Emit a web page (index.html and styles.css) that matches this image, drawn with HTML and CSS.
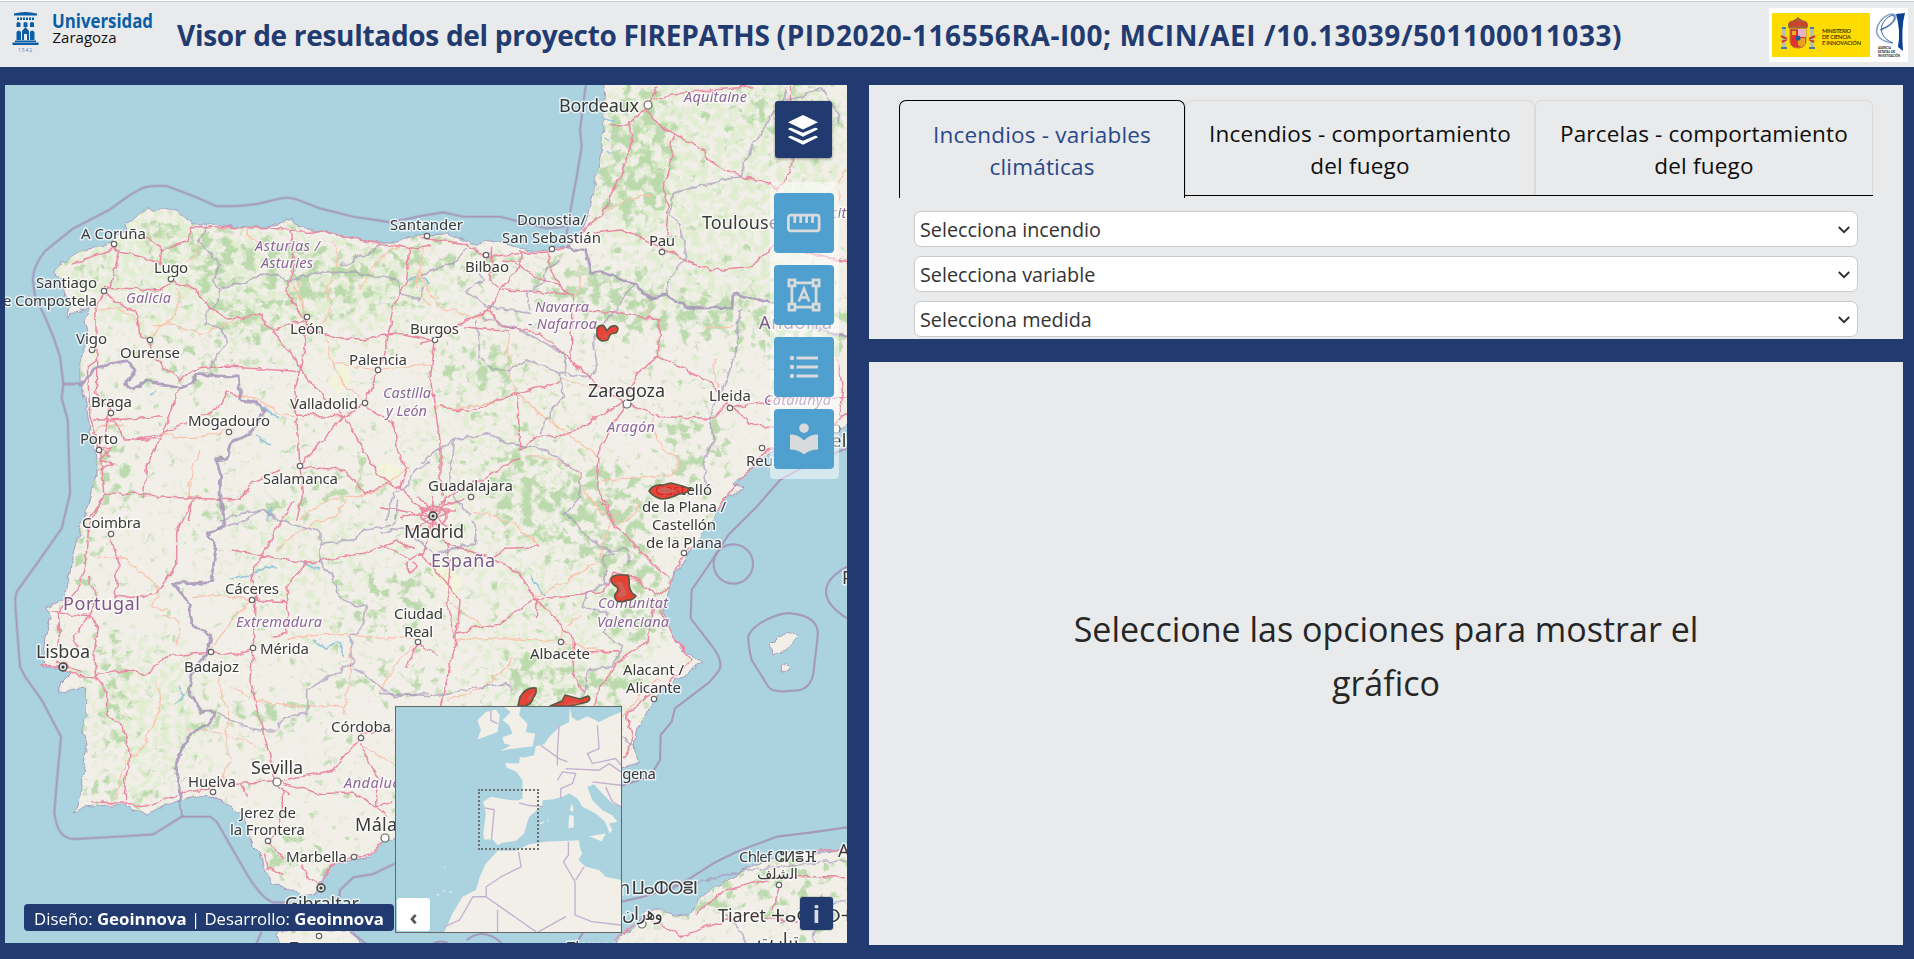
FILE: index.html
```html
<!DOCTYPE html>
<html lang="es">
<head>
<meta charset="utf-8">
<title>Visor FIREPATHS</title>
<link rel="stylesheet" href="styles.css">
</head>
<body>
<header class="header">
  <svg class="logo-unizar" viewBox="0 0 150 50" width="150" height="50">
    <g fill="#0a5ea8">
      <path d="M4 4.500Q15 1.500 27 4.500V6.500H4z"/>
      <path d="M7 8.500h2v2.500h-2zM10 8.500h2v2.500h-2zM13 8.500h2v2.500h-2zM16 8.500h2v2.500h-2zM19 8.500h2v2.500h-2zM22 8.500h2v2.500h-2z"/>
      <path d="M6.500 18v-4q1.700-2 4 0v4zM13.500 18v-4q1.700-2 4 0v4zM20 18v-4q1.700-2 4 0v4z"/>
      <path d="M6.500 31v-8q2-3 4.500 0v8zM12 31v-9l3.500-4 3.500 4v9h-2v-6h-3v6zM20 31v-8q2-3 4.500 0v8z"/>
      <path d="M5 31.500h21v1.500h-21zM2.500 33.500h26v2.500h-26z"/>
    </g>
    <text x="8" y="42.500" class="uz-year" textLength="14">1542</text>
    <text x="42" y="19" class="uz-name" textLength="101" lengthAdjust="spacingAndGlyphs">Universidad</text>
    <text x="42.500" y="34" class="uz-city" textLength="64" lengthAdjust="spacingAndGlyphs">Zaragoza</text>
  </svg>
  <h1 class="title">Visor de resultados del proyecto FIREPATHS <span class="code">(PID2020-116556RA-I00; MCIN/AEI /10.13039/501100011033)</span></h1>
  <svg class="logo-mcin" viewBox="0 0 139 54" width="139" height="54">
    <rect width="139" height="54" fill="#fff"/>
    <rect x="3" y="5" width="98" height="44" fill="#ffdc00"/>
    <path d="M20 20q-2-7 4-7l5-3 5 3q6 0 4 7z" fill="#c8442f" stroke="#8b6b34"/>
    <path d="M29 9v5M22 19h14" stroke="#8c7a30" stroke-width="1.200"/>
    <path d="M21 21h16v13q-1 6-8 6t-8-6z" fill="#e0332b" stroke="#b08040"/>
    <path d="M29 21h8v8h-8z" fill="#e6b3c0"/><path d="M29 30h7v7l-4 2-3-2z" fill="#e8a31e"/>
    <path d="M23 23h4v4h-4z" fill="#dfb52a"/><circle cx="29" cy="30" r="2.600" fill="#2456a5"/>
    <path d="M15 21v18M43 21v18" stroke="#aebfc0" stroke-width="3.500"/>
    <path d="M13 20h4M41 20h4M12 40h6M40 40h6" stroke="#4a7c96" stroke-width="2"/>
    <path d="M12 28l6 3M13 34l5-3M46 28l-6 3M45 34l-5-3" stroke="#d03a2c" stroke-width="2.200"/>
    <g class="mcin"><text x="53" y="24.500" textLength="29">MINISTERIO</text><text x="53" y="30.800" textLength="29">DE CIENCIA</text><text x="53" y="37" textLength="39">E INNOVACIÓN</text></g>
    <path d="M123 35C112 33 106 28 108 20 111 10 121 4 126 7 129 12 119 20 111 22" fill="none" stroke="#86a3cc" stroke-width="1.600"/>
    <path d="M124 35C114 31 111 24 113 17 116 10 123 6 125 8 127 13 119 19 112 21" fill="none" stroke="#3a62a5" stroke-width="1"/>
    <path d="M127 6l9-1q-4 14-2 38l-5-4q3-16-2-33z" fill="#0b3f8f"/>
    <g class="aei"><text x="109" y="41" textLength="13" lengthAdjust="spacingAndGlyphs">AGENCIA</text><text x="109" y="45" textLength="17" lengthAdjust="spacingAndGlyphs">ESTATAL DE</text><text x="109" y="49" textLength="22" lengthAdjust="spacingAndGlyphs">INVESTIGACIÓN</text></g>
  </svg>
</header>

<main class="main">
  <section class="map">
    <svg class="map-canvas" viewBox="5 85 842 858" width="842" height="858">
      <defs>
        <filter id="wobble" x="5" y="85" width="842" height="858" filterUnits="userSpaceOnUse">
          <feTurbulence type="fractalNoise" baseFrequency=".1" numOctaves="2" seed="4" result="n"/>
          <feDisplacementMap in="SourceGraphic" in2="n" scale="7" xChannelSelector="R" yChannelSelector="G"/>
        </filter>
        <filter id="forest" x="5" y="85" width="842" height="858" filterUnits="userSpaceOnUse" color-interpolation-filters="sRGB">
          <feGaussianBlur in="SourceGraphic" stdDeviation="13" result="d"/>
          <feTurbulence type="fractalNoise" baseFrequency=".09" numOctaves="5" seed="11"/>
          <feColorMatrix values="0 0 0 0 0  0 0 0 0 0  0 0 0 0 0  1 0 0 0 0" result="n"/>
          <feComposite in="n" in2="d" operator="arithmetic" k2="1" k3=".26" k4="-.68"/>
          <feComponentTransfer result="m"><feFuncA type="linear" slope="6"/></feComponentTransfer>
          <feFlood flood-color="#b3d6a3" flood-opacity=".85"/>
          <feComposite in2="m" operator="in"/>
        </filter>
        <filter id="meadow" x="5" y="85" width="842" height="858" filterUnits="userSpaceOnUse" color-interpolation-filters="sRGB">
          <feGaussianBlur in="SourceGraphic" stdDeviation="20" result="d"/>
          <feTurbulence type="fractalNoise" baseFrequency=".13" numOctaves="4" seed="31"/>
          <feColorMatrix values="0 0 0 0 0  0 0 0 0 0  0 0 0 0 0  1 0 0 0 0" result="n"/>
          <feComposite in="n" in2="d" operator="arithmetic" k2="1" k3=".22" k4="-.63"/>
          <feComponentTransfer result="m"><feFuncA type="linear" slope="5"/></feComponentTransfer>
          <feFlood flood-color="#dcecca" flood-opacity=".8"/>
          <feComposite in2="m" operator="in"/>
        </filter>
        <path id="iberia" d="M605 85L603 117 602 147 598 167 593 190 588 213 583 227 577 237 570 243 565 247 553 249 537 251 527 251 520 248 503 242 490 240 477 246 463 240 447 234 427 235 410 238 397 242 377 242 353 238 333 234 313 231 302 226 287 218 280 224 267 226 233 227 210 225 192 225 187 217 177 212 163 207 156 212 148 208 140 213 133 220 125 225 127 232 117 235 112 244 100 247 83 250 72 257 60 263 55 273 63 280 62 290 70 300 67 318 80 310 90 307 83 323 88 333 85 347 80 363 80 382 85 397 88 417 90 430 95 450 97 470 92 493 87 510 82 520 78 537 72 563 67 587 63 600 47 608 50 623 45 637 43 657 42 667 55 667 63 668 70 674 62 682 58 693 70 690 85 687 87 700 86 713 82 730 87 743 85 757 82 790 74 812 83 808 107 805 123 805 133 810 148 814 160 808 180 800 200 796 217 798 230 805 243 817 248 830 252 845 260 853 263 867 273 883 290 890 302 897 315 893 318 888 325 873 333 865 353 860 370 857 383 843 395 838 500 835 600 775 622 767 638 762 635 745 638 727 647 713 653 700 663 690 680 677 702 663 693 654 682 650 673 637 667 620 663 607 670 587 680 567 690 550 708 527 717 513 727 497 745 488 732 483 753 467 770 452 803 447 833 433 860 414V75H605z"/>
        <path id="africa" d="M860 845L827 852 790 853 753 865 723 883 700 897 690 913 673 916 657 908 643 915 635 928 622 935 605 955H860z"/>
        <path id="islands" d="M770 645l9-9 15-4 4 4-13 14-12 4zM781 667l5-4 4 6-8 2z"/>
        <path id="rif" d="M278 930h75l14 25h-88z"/>
        <clipPath id="land"><use href="#iberia"/><use href="#africa"/><use href="#islands"/><use href="#rif"/></clipPath>
      </defs>
      <rect x="5" y="85" width="842" height="858" fill="#aad3df"/>
      <g filter="url(#wobble)">
        <g fill="#f2efe9" stroke="#a89cbd" stroke-width="1"><use href="#iberia"/><use href="#africa"/><use href="#islands"/><use href="#rif"/></g>
        <g clip-path="url(#land)">
          <g filter="url(#meadow)">
            <ellipse cx="150" cy="260" rx="110" ry="80"/><ellipse cx="720" cy="170" rx="130" ry="150"/><ellipse cx="300" cy="290" rx="170" ry="60"/><ellipse cx="150" cy="720" rx="60" ry="80"/><ellipse cx="500" cy="470" rx="90" ry="130" opacity=".6"/><ellipse cx="300" cy="560" rx="90" ry="60" opacity=".7"/><ellipse cx="560" cy="640" rx="110" ry="70" opacity=".7"/>
          </g>
          <g filter="url(#forest)">
            <ellipse cx="165" cy="232" rx="30" ry="22"/><ellipse cx="90" cy="265" rx="35" ry="14"/><ellipse cx="215" cy="265" rx="26" ry="45" opacity=".9"/><ellipse cx="270" cy="255" rx="60" ry="20"/><ellipse cx="245" cy="320" rx="40" ry="25" opacity=".9"/><ellipse cx="330" cy="290" rx="70" ry="22" opacity=".9"/><ellipse cx="385" cy="265" rx="55" ry="16"/><ellipse cx="470" cy="262" rx="60" ry="15"/><ellipse cx="635" cy="155" rx="45" ry="75"/><ellipse cx="590" cy="285" rx="65" ry="22"/><ellipse cx="690" cy="315" rx="100" ry="24"/><ellipse cx="800" cy="330" rx="55" ry="50"/><ellipse cx="790" cy="110" rx="60" ry="30" opacity=".8"/><ellipse cx="485" cy="370" rx="48" ry="28" opacity=".9"/><ellipse cx="110" cy="475" rx="25" ry="45" opacity=".9"/><ellipse cx="80" cy="560" rx="20" ry="40" opacity=".7"/><ellipse cx="180" cy="360" rx="60" ry="25" opacity=".6"/><ellipse cx="250" cy="510" rx="55" ry="13"/><ellipse cx="340" cy="485" rx="45" ry="13"/><ellipse cx="520" cy="490" rx="30" ry="60"/><ellipse cx="600" cy="515" rx="55" ry="55"/><ellipse cx="690" cy="450" rx="35" ry="50" opacity=".8"/><ellipse cx="640" cy="600" rx="35" ry="45"/><ellipse cx="530" cy="680" rx="40" ry="30"/><ellipse cx="600" cy="680" rx="45" ry="20"/><ellipse cx="400" cy="600" rx="60" ry="35" opacity=".7"/><ellipse cx="380" cy="680" rx="70" ry="18" opacity=".6"/><ellipse cx="250" cy="720" rx="80" ry="16" opacity=".8"/><ellipse cx="110" cy="690" rx="25" ry="60" opacity=".8"/><ellipse cx="110" cy="795" rx="45" ry="12"/><ellipse cx="290" cy="855" rx="25" ry="30" opacity=".8"/><ellipse cx="810" cy="870" rx="60" ry="12"/><ellipse cx="730" cy="900" rx="70" ry="18" opacity=".8"/><ellipse cx="820" cy="920" rx="30" ry="22" opacity=".8"/>
          </g>
          <path d="M327 380l20-18 5 20-15 14zM380 460l22 8-6 14-20-5zM440 560l22 20-8 22-24-30z" fill="#f4f4d8" opacity=".8"/>
        </g>
        <g fill="none" stroke="#98c8dc" stroke-width="1.700"><path d="M230 578l20-3 15-8 12 2M300 563l20 6M313 640l12 8 14-4 6 12M175 705l10-10-6-8M150 395l8-4M255 435l8 6 8 4M267 520l4-14M530 575l14 20M602 118l13 4M606 138l3 3M607 152l3 3M408 280l16-4 4 8M264 407l14 12"/></g>

        <!-- carreteras nacionales -->
        <g class="road minor">
          <g transform="translate(0 80) scale(.33333)"><path d="M300 690Q380 670 420 740M460 740Q520 720 600 765L700 720M530 620Q560 700 480 740L450 780M600 480Q590 530 560 545M870 600L920 700Q900 640 890 600M740 450Q750 490 800 500M1000 490Q1030 560 980 620 1010 700 960 740M980 770Q990 900 1090 960M1080 630Q1130 520 1200 500M700 940Q780 950 830 1000L880 1010M490 1060Q560 1090 680 1050M600 1110Q560 1200 570 1260M1000 850L1130 870 1290 850M370 1040Q300 1020 280 1060M1230 1160Q1130 1240 1090 1240M900 1320Q960 1250 1100 1240M1270 500L1250 620 1290 680"/></g>
          <g transform="translate(420 80) scale(.33333)"><path d="M0 570Q40 700 100 690L200 720M270 760Q250 860 290 940 130 1000 40 980M420 900L560 925M690 640Q690 700 680 720M850 740L950 740M470 560Q500 620 460 650M890 840Q860 870 900 920M700 1010Q700 1110 770 1130 800 1180 720 1190L540 1200M290 940Q430 1060 500 1100L540 1130M320 1130Q440 1130 470 1180 500 1260 560 1310M550 400Q620 350 690 350M1281 270Q1240 310 1260 370"/></g>
          <g transform="translate(0 500) scale(.33333)"><path d="M290 170Q380 160 410 210 480 250 480 290 420 330 510 330M490 350Q560 340 530 440M580 290Q680 280 750 300 680 380 630 450M650 480Q660 600 690 640 660 740 700 780 660 800 670 840M700 560Q770 620 920 620 1020 600 1040 640M860 420Q1000 380 1160 420 1180 400 1250 420M1050 440Q1060 520 1030 640M470 550Q500 620 450 690 430 760 380 780 350 850 350 900M1090 740Q1150 780 1180 790M560 690Q680 690 770 740M830 150Q900 80 1000 50 1040 0 1040 0"/></g>
          <g transform="translate(380 500) scale(.33333)"><path d="M230 420Q350 410 540 425 600 440 720 460M460 290Q560 250 660 180 680 60 720 40M600 350Q540 380 540 420M200 600Q330 580 400 470M0 580Q40 480 100 440M210 310Q280 360 310 380M480 140Q380 40 280 40M700 60Q760 80 780 0M760 240L700 230M730 650L800 560 840 540"/></g>
        </g>
        <!-- autopistas -->
        <g class="road">
          <g transform="translate(0 80) scale(.33333)"><path d="M575 443H830L890 455 1000 460 1130 488 1230 505 1290 500M575 443L560 485 485 510 480 550M485 510Q470 480 430 470M340 510L480 548M360 510L330 620 310 640 288 690V840L262 860 270 1010 298 1110 315 1240 262 1320M220 552L300 520 345 505M312 622L480 630 520 605 590 630 625 680 680 718 780 705 900 860 915 890 1030 1010 1090 970M310 640L410 700 420 770 450 790 480 850 540 900 600 862 700 862 900 875M870 450L880 520 870 600 855 630 900 700 920 720 915 800 900 870 885 930 890 1010 900 1160M820 750L920 720M920 750L1070 780 1180 760 1290 780M1230 500L1220 600 1180 680 1160 790 1135 870 1095 970 1030 1010 890 1005M1030 1010L900 1160M1035 1010L1130 1180 1200 1225M1095 980L1180 1030 1190 1120 1220 1165 1200 1225 1270 1290 1300 1320M900 1160L1030 1170 1095 1240 1160 1210 1200 1220M900 1160L910 1240 890 1320M840 1170L760 1210 715 1260 580 1255 460 1250 430 1240 315 1240M580 1255L565 1320M540 920L490 1060 440 1160 430 1250M280 1020H330L490 1010M330 1000L360 1050 370 1080 490 1075M400 1080L490 1060 560 1030M600 1010L660 980 680 935 720 950M290 840L290 940 330 990 300 1110 330 1130M298 1110L335 1100 300 1140 335 1150 300 1170"/></g>
          <g transform="translate(420 80) scale(.33333)"><path d="M0 475L130 490 200 530 310 520 400 515 440 500 500 440 550 400 600 290 635 190 628 130 680 80 715 20M570 138H628M680 85Q700 130 760 160L745 290 725 325 745 380 738 470M760 160L850 210 870 245 960 290 1050 310 1070 330 1115 260 1110 160 1112 15M680 70L750 40 1000 20M520 460L600 450 720 500 800 540 870 570 990 560 1060 500 1281 545M215 500L210 600 250 630 360 635 460 645M250 540L300 550 340 590 420 620 460 650M385 520L390 560 420 620M300 510V560L230 640 205 690 240 735 360 760 440 830 540 920 620 970 720 1010 880 1015 920 970 1000 1035 1060 1045M0 790L45 780 140 720 205 690M45 785L30 900 45 980 60 1080 60 1200 70 1250M130 740L270 755M460 650L455 790 450 840M470 690L590 700 720 720 715 830 870 905 920 970M715 830L650 880 620 960 500 1030 440 1065 350 1068 300 1110 295 1000 290 940 420 905M60 980L150 995 210 970 290 940M620 970L540 1100 530 1220 580 1320M300 1135L200 1190 100 1240 60 1270M930 985L1050 960 1281 950M1281 1000L1160 1090 1040 1110 960 1200 890 1290M1250 830L1270 930 1260 1010M0 1290L100 1270M10 1320L80 1260"/></g>
          <g transform="translate(0 500) scale(.33333)"><path d="M300 0L265 90 255 200 230 270 175 340 180 400 170 440M265 230L290 290 270 350 220 410 230 450M330 110L355 180 345 290 380 295 470 280 530 190 530 100 580 0M150 335L270 350 295 380 285 470 290 530 240 530 185 510M130 490L185 500M290 525L380 510 440 525 500 470 640 455 700 465 760 445 765 300 750 230 880 0M760 300L860 305 865 250 920 190 1090 160 1190 120 1240 150M695 150L920 190M860 290L860 400 810 410M760 445L750 540 790 700 830 840M290 530L320 580 320 640 370 680 390 770 370 880 380 910 450 920 540 880 600 870 700 850 850 845M270 905L380 910M720 850L740 890M850 840L1000 810 1080 720 1085 700 1180 690M1085 730L1100 780 1150 850M850 850L960 880 1060 880 1130 920 1180 905M850 860L850 930 810 1030 850 1080M830 850L870 890M790 1060L800 1100 850 1130M905 1100L930 1140 965 1160 990 1100 1060 1070 1110 1065 1155 1015M1130 860V920L1160 950"/></g>
          <g transform="translate(380 500) scale(.33333)"><path d="M160 50L190 20 250 0M160 50L0 20M160 50L130 160 90 180 0 130M120 160L170 210 240 300 230 420 180 620M160 60L200 130 320 170 420 220 460 290 530 360 580 420 580 520 610 580M200 130L210 200 200 310 230 420M340 170L380 145 480 140M230 400L300 380 360 370 460 300 520 290 670 275 700 220 780 240 830 290 870 260 900 180 930 140M660 0L700 70 860 230M820 300L805 420 730 470 660 560 640 620M590 455L720 455M830 300L890 430 940 480 850 560 740 640M740 640L760 720 730 780M470 290V355M115 426L80 500M115 426L170 465M945 1240L1040 1170 1200 1130 1401 1130M700 1320L800 1250 900 1310 1100 1240 1250 1270M1200 1150L1180 1230M1300 1050L1401 1050"/></g>
          <path d="M401 519l28-10M418 497l30 32M433 495v36M410 530l40-20M420 510h36M422 516a12 9 0 1 0 24 0a12 9 0 1 0-24 0M408 562a5 5 0 1 0 6 0M40 665h24M56 660l25 12" stroke-width="1.700"/>
        </g>
        <!-- límites -->
        <g class="border thin">
          <g transform="translate(0 80) scale(.33333)"><path d="M620 440L595 480 660 555 635 600 660 625 655 660 625 690 615 730 665 745 680 790 635 850 630 870M665 625L740 610 760 590 830 580 870 605 950 580 1060 575 1120 585 1190 600 1200 640 1260 660 1270 620M1130 490L1120 520 1080 525 1060 550 1020 550M660 1320L720 1300 790 1290 820 1320M1290 1140L1250 1170 1210 1230 1180 1240 1160 1320"/></g>
          <g transform="translate(420 80) scale(.33333)"><path d="M140 510L100 550 0 580M160 570L190 600 140 630 200 680 270 690 330 700M420 540L380 560 370 610 320 640 330 690M170 720L180 830 220 870 270 870 320 840 420 880 500 890M180 710L300 750 430 820 440 890M510 900L530 850 520 780 540 740 590 690 640 610M420 880L430 950 390 1000 360 1060M100 1080L210 1060 260 1090 380 1110 480 1180 480 1250 430 1310M100 1080L90 1200 100 1250 150 1310M0 1150L100 1080M960 690L950 800 920 900 870 1010 880 1080 850 1150 860 1220 800 1250M740 640L750 590 800 530 780 440 750 400 760 340 860 310 960 290 990 210 1060 100 1095 60 1095 20M1095 60L1150 50 1200 20 1240 80 1260 130"/></g>
          <g transform="translate(0 500) scale(.33333)"><path d="M640 92L720 70 790 30 830 60 890 75 960 95V130L1050 120 1100 90 1180 75 1190 0M960 120V190L1000 230 1010 280 1060 320 1100 310 1090 380 1050 410 1060 490 920 570 920 640 850 650 830 690 780 690 730 680 650 640M1060 500L1180 590 1290 580"/></g>
          <g transform="translate(380 500) scale(.33333)"><path d="M0 100L70 80 160 160 290 130 280 60M560 40L620 110 700 160 670 180 680 250 620 280 610 320 680 340 670 400 730 440 700 500 620 510 610 600M0 580L150 590 250 570 370 550 400 570M750 190L740 150 660 150M700 700L770 740M820 1180L1100 1110 1401 1080M1040 1240L1100 1329M1200 1270L1401 1200M1330 1180L1300 1329"/></g>
        </g>
        <g class="border">
          <g transform="translate(0 80) scale(.33333)"><path d="M190 912H240L290 862 380 845 405 870 380 910 400 930 440 900 480 912 540 920 580 910 595 880 650 885 715 888 720 960 760 965 795 990 750 1060 690 1090 680 1135 645 1140 662 1180 660 1260"/></g>
          <g transform="translate(0 500) scale(.33333)"><path d="M660 0L672 75 625 105 650 150 635 245 520 250 560 300 580 375 635 405 620 460 580 510 565 570 605 635 640 632 630 675 580 690 545 750 525 800 535 850 548 950"/></g>
          <g transform="translate(420 80) scale(.33333)"><path d="M435 500L500 515 515 580 540 575 645 615 690 655 740 645 800 685 935 682 940 640 1040 665 1130 700 1200 750 1290 770"/></g>
        </g>
      </g>
      <!-- aguas territoriales -->
      <g class="border sea">
        <g transform="translate(0 80) scale(.33333)"><path d="M1260 408L1230 415 1170 427 1115 418 1060 410 960 385 890 358Q860 348 830 358L765 373 710 378H648L585 350 500 318Q450 315 425 325L385 348 330 388 220 445 135 513Q98 560 98 600L105 650 130 700 160 770 180 830 190 912 185 955 203 1020 210 1240 185 1345 115 1445 50 1535 45 1560 52 1660 60 1760 75 1790 125 1860 183 1970 170 2110 163 2195Q170 2275 220 2277L400 2267 460 2263 545 2210H630L650 2225 745 2390Q790 2460 820 2467H870M1260 408L1330 397 1390 410H1500L1580 430 1640 445 1695 440M1757 15L1740 150 1745 200 1730 290 1715 370 1695 490M1185 2350L1120 2382 1060 2392 1020 2430 1015 2470M785 2555L765 2600M1050 2555L1110 2600"/></g>
        <g transform="translate(380 500) scale(.33333)"><path d="M1401 -155L1300 -115 1200 -60 1130 20 1045 105 1000 175 935 270 932 355 990 430Q1040 490 1010 520L990 545 885 625 875 665 842 705 840 780 810 830 725 857M1105 410Q1110 390 1140 370 1200 335 1235 340 1320 350 1313 410L1300 520Q1290 575 1235 572 1180 580 1165 560L1115 480Q1105 440 1105 410zM1401 200Q1338 235 1338 275T1401 355M1401 982L1290 998 1190 1010 1070 1055 1000 1090 930 1135 870 1165 790 1190 725 1205M160 1329Q180 1320 205 1329M260 1320Q310 1280 365 1329M590 1329L610 1295"/><circle cx="1060" cy="192" r="59"/></g>
      </g>
      <!-- ciudades -->
      <g class="dots">
        <circle cx="114" cy="244" r="2.700"/><circle cx="171" cy="279" r="2.700"/><circle cx="104" cy="291" r="2.700"/><circle cx="92" cy="350" r="2.700"/><circle cx="150" cy="340" r="2.700"/><circle cx="111" cy="413" r="2.700"/><circle cx="99" cy="450" r="2.700"/><circle cx="229" cy="432" r="2.700"/><circle cx="300" cy="466" r="2.700"/><circle cx="307" cy="317" r="2.700"/><circle cx="378" cy="370" r="2.700"/><circle cx="365" cy="403" r="2.700"/><circle cx="427" cy="236" r="2.700"/><circle cx="486" cy="255" r="2.700"/><circle cx="552" cy="249" r="2.700"/><circle cx="662" cy="252" r="2.700"/><circle cx="435" cy="340" r="2.700"/><circle cx="730" cy="408" r="2.700"/><circle cx="471" cy="497" r="2.700"/><circle cx="762" cy="448" r="2.700"/><circle cx="684" cy="553" r="2.700"/><circle cx="561" cy="642" r="2.700"/><circle cx="654" cy="699" r="2.700"/><circle cx="418" cy="642" r="2.700"/><circle cx="111" cy="534" r="2.700"/><circle cx="252" cy="600" r="2.700"/><circle cx="253" cy="648" r="2.700"/><circle cx="211" cy="652" r="2.700"/><circle cx="361" cy="738" r="2.700"/><circle cx="213" cy="792" r="2.700"/><circle cx="268" cy="841" r="2.700"/><circle cx="354" cy="857" r="2.700"/><circle cx="779" cy="885" r="2.700"/><circle cx="319" cy="936" r="2.700"/>
        <circle cx="648" cy="105" r="4"/><circle cx="627" cy="404" r="4"/><circle cx="277" cy="782" r="4"/><circle cx="385" cy="838" r="4"/><circle cx="642" cy="924" r="4"/><circle cx="836" cy="429" r="4"/>
      </g>
      <g class="capital"><circle cx="433" cy="516" r="4"/><circle cx="63" cy="667" r="4"/><circle cx="321" cy="888" r="4"/></g>
      <g class="capital-dot"><circle cx="433" cy="516" r="1.500"/><circle cx="63" cy="667" r="1.500"/><circle cx="321" cy="888" r="1.500"/></g>
      <g class="lbl">
        <text x="81" y="239" textLength="65">A Coruña</text><text x="154" y="273" textLength="34">Lugo</text><text x="36" y="288" textLength="61">Santiago</text><text x="-6" y="306" textLength="103">de Compostela</text><text x="76" y="344" textLength="31">Vigo</text><text x="120" y="358" textLength="60">Ourense</text><text x="91" y="407" textLength="41">Braga</text><text x="80" y="444" textLength="38">Porto</text><text x="188" y="426" textLength="82">Mogadouro</text><text x="263" y="484" textLength="75">Salamanca</text><text x="290" y="334" textLength="34">León</text><text x="349" y="365" textLength="58">Palencia</text><text x="290" y="409" textLength="68">Valladolid</text><text x="390" y="230" textLength="73">Santander</text><text x="465" y="272" textLength="44">Bilbao</text><text x="517" y="225" textLength="69">Donostia/</text><text x="502" y="243" textLength="99">San Sebastián</text><text x="649" y="246" textLength="26">Pau</text><text x="410" y="334" textLength="49">Burgos</text><text x="709" y="401" textLength="42">Lleida</text><text x="428" y="491" textLength="85">Guadalajara</text><text x="655" y="495" textLength="57">Castelló</text><text x="642" y="512" textLength="84">de la Plana /</text><text x="652" y="530" textLength="64">Castellón</text><text x="646" y="548" textLength="76">de la Plana</text><text x="746" y="466" textLength="34">Reus</text><text x="530" y="659" textLength="60">Albacete</text><text x="623" y="675" textLength="61">Alacant /</text><text x="626" y="693" textLength="55">Alicante</text><text x="394" y="619" textLength="49">Ciudad</text><text x="404" y="637" textLength="29">Real</text><text x="82" y="528" textLength="59">Coimbra</text><text x="225" y="594" textLength="54">Cáceres</text><text x="260" y="654" textLength="49">Mérida</text><text x="184" y="672" textLength="55">Badajoz</text><text x="331" y="732" textLength="60">Córdoba</text><text x="188" y="787" textLength="48">Huelva</text><text x="240" y="818" textLength="56">Jerez de</text><text x="230" y="835" textLength="75">la Frontera</text><text x="286" y="862" textLength="61">Marbella</text><text x="587" y="779" textLength="69">Cartagena</text><text x="739" y="862" textLength="78">Chlef ⵛⵍⴻⴼ</text><text x="290" y="952">Tanger</text><text x="567" y="952">Tlemcen</text>
        <text x="757" y="879" textLength="41">الشلف</text>
      </g>
      <g class="lbl big">
        <text x="559" y="112" textLength="80">Bordeaux</text><text x="702" y="229" textLength="77">Toulouse</text><text x="588" y="397" textLength="77">Zaragoza</text><text x="793" y="447" textLength="86">Barcelona</text><text x="404" y="538" textLength="60">Madrid</text><text x="36" y="658" textLength="54">Lisboa</text><text x="251" y="774" textLength="52">Sevilla</text><text x="355" y="831" textLength="64">Málaga</text><text x="285" y="910" textLength="74">Gibraltar</text><text x="619" y="894" textLength="79">n ⵡⴰⵀⵔⴻⵏ</text><text x="622" y="920" textLength="41">وهران</text><text x="718" y="922" textLength="48">Tiaret</text><text x="771" y="922">ⵜⴰⵀⴻⵔⵜ</text><text x="757" y="946">تيارت</text><text x="838" y="857">Alger</text><text x="842" y="584">Palma</text>
      </g>
      <g class="lbl region">
        <text x="126" y="303" textLength="45">Galicia</text><text x="255" y="251" textLength="65">Asturias /</text><text x="261" y="268" textLength="52">Asturies</text><text x="383" y="398" textLength="48">Castilla</text><text x="386" y="416" textLength="41">y León</text><text x="684" y="102" textLength="63">Aquitaine</text><text x="535" y="312" textLength="54">Navarra</text><text x="528" y="329" textLength="69">- Nafarroa</text><text x="764" y="405" textLength="67">Catalunya</text><text x="607" y="432" textLength="48">Aragón</text><text x="813" y="218" textLength="62">Occitanie</text><text x="598" y="608" textLength="70">Comunitat</text><text x="597" y="627" textLength="72">Valenciana</text><text x="236" y="627" textLength="86">Extremadura</text><text x="344" y="788" textLength="68">Andalucía</text>
      </g>
      <g class="lbl country"><text x="759" y="329" textLength="73">Andorra</text><text x="431" y="567" textLength="64">España</text><text x="63" y="610" textLength="77">Portugal</text></g>
      <!-- incendios -->
      <g class="fires">
        <path d="M597 328q3-4 7-2l3 5q3-6 9-5 4 2 0 7-6 0-7 4 0 4-7 4-6-3-5-7z"/>
        <path d="M649 491q4-7 14-6l8-2q12 3 20 6-5 5-12 5-9 5-18 5-9-3-12-8z"/>
        <path d="M611 579q2-4 7-4h10q2 5 1 10 1 5 3 8l4 3q-4 5-9 4-4 3-10 1-4-4-1-8 3-3 1-6-6-3-6-8z"/>
        <path d="M518 706l2-9q6-10 16-9 1 6-3 10-1 6-8 8z"/>
        <path d="M550 706l12-5 3-6 15 4 8-3q4 3-1 6l-16 4z"/>
      </g>
      <g class="fire-in"><path d="M603 336l5-1-2 3zM656 491l8-4 14 4-12 3zM616 582h6l5 12-6 4-4-2 4-6zM527 698l6-5-3 8zM564 705l10-3 6 2z"/></g>
    </svg>

    <button class="layers" aria-label="Capas"><svg width="30" height="30" viewBox="0 0 30 30" fill="#fff"><path d="M15 0L30 7.200 15 14.400 0 7.200z"/><path d="M0 14.200q2-2 4.200-1L15 17.800l10.800-4.600q2.200-1 4.200 1L15 21.800z"/><path d="M0 22.200q2-2 4.200-1L15 25.800l10.800-4.600q2.200-1 4.200 1L15 29.800z"/></svg></button>
    <nav class="tools">
      <button class="tool"><svg width="34" height="20" viewBox="0 0 34 20"><rect x="1.400" y="2.200" width="30.700" height="15.700" rx="2.500" fill="none" stroke="#d9dadb" stroke-width="2.800"/><path d="M7.800 3v7M13.700 3v7M19.600 3v7M25.500 3v7" stroke="#d9dadb" stroke-width="2.800"/></svg></button>
      <button class="tool"><svg width="34" height="34" viewBox="0 0 34 34" fill="none" stroke="#d9dadb" stroke-width="2.800"><rect x="1.900" y="1.900" width="6" height="6"/><rect x="26.100" y="1.900" width="6" height="6"/><rect x="1.900" y="26.100" width="6" height="6"/><rect x="26.100" y="26.100" width="6" height="6"/><path d="M8 4.900h18M8 29.100h18M4.900 8v18M29.100 8v18"/><path d="M11.800 23.500L17 10.500 22.200 23.500M13.500 19.500h7" stroke-width="2.500"/></svg></button>
      <button class="tool"><svg width="30" height="24" viewBox="0 0 30 24" fill="#d9dadb"><circle cx="3" cy="3" r="2.200"/><circle cx="3" cy="12" r="2.200"/><circle cx="3" cy="21" r="2.200"/><path d="M7.500 1.500H29v3H7.500zM7.500 10.500H29v3H7.500zM7.500 19.500H29v3H7.500z"/></svg></button>
      <button class="tool"><svg width="28" height="32" viewBox="0 0 28 32" fill="#d9dadb"><circle cx="14" cy="5.200" r="4.800"/><path d="M0 11.500Q8 11 14 17.500 20 11 28 11.500V26.500Q20 26.500 14 31.500 8 26.500 0 26.500z"/></svg></button>
    </nav>

    <div class="overview">
      <svg viewBox="0 0 676 676" width="225" height="225">
        <rect width="676" height="676" fill="#aad3df"/>
        <g fill="#f2efe9">
          <path d="M676 15L640 30 610 45 575 28 545 42 528 30 522 0L520 45 490 60 460 90 445 112 420 118 415 145 385 152 372 150 370 170 328 168 332 182 362 195 380 220V275L368 280 345 280 285 270 262 285 270 320 262 380 265 398 290 398 305 415 320 408 360 402 385 380 392 355 400 330 440 295 440 280 470 278 500 270 520 260 545 275 560 300 600 320 628 345 642 380 650 370 640 350 665 345 650 325 620 310 590 280 575 240 595 232 620 260 650 290 676 300z"/>
          <path d="M325 0L345 15 320 40 340 55 350 80 320 90 325 110 345 115 313 133 335 128 410 118 418 80 390 75 395 50 370 25 375 0z"/>
          <path d="M270 15L300 8 312 25 305 75 245 98 255 70 245 40z"/>
          <path d="M528 290l6 15-4 12-8-8zM520 325l14 2v34l-16 3zM580 388l50-8-12 24z"/>
          <path d="M306 432L360 432 400 412 450 405 550 400 552 420 560 440 548 460 570 480 610 490 630 510 676 520V676H145L170 620 200 570 240 550 252 510 270 470z"/>
        </g>
        <g fill="none" stroke="#c3b0cf" stroke-width="4">
          <path d="M370 288l30 8 40 3M265 303l30 5-8 90M490 55l-5 80v40M435 115l55 40 25 10M605 55l5 70-35 15 15 30 70-15 16 20M510 185l100 5 30-20 36 25M485 220l15-25 40 5-10 30-35 15v30M590 225l86 10M630 240l20 45 26 15M368 435l8 45-60 30-45 30v30h-40l-40 70-45 20M518 405v40l-15 20 35 60v100l50 20 88 10M540 520l25-40M270 570l150 105M305 610v66M420 680l90-50M285 10v30l20 10"/>
        </g>
        <path d="M122 562l8 4M140 552l6 2M160 555l8 2M145 480l4 2M433 350l12-4M455 340l5 2" stroke="#e4ecea" stroke-width="4"/>
      </svg>
      <span class="extent"></span>
      <button class="collapse">‹</button>
    </div>
    <div class="credits"><span>Diseño: <b>Geoinnova</b> | Desarrollo: <b>Geoinnova</b></span></div>
    <button class="info">i</button>
  </section>

  <div class="side">
    <section class="panel filters">
      <div class="tabs">
        <a class="tab active">Incendios - variables<br>climáticas</a>
        <a class="tab mid">Incendios - comportamiento<br>del fuego</a>
        <a class="tab last">Parcelas - comportamiento<br>del fuego</a>
      </div>
      <div class="selects">
        <div class="select"><span>Selecciona incendio</span><svg width="12" height="8" viewBox="0 0 12 8"><path d="M.8 1L6 6.200 11.200 1"/></svg></div>
        <div class="select"><span>Selecciona variable</span><svg width="12" height="8" viewBox="0 0 12 8"><path d="M.8 1L6 6.200 11.200 1"/></svg></div>
        <div class="select"><span>Selecciona medida</span><svg width="12" height="8" viewBox="0 0 12 8"><path d="M.8 1L6 6.200 11.200 1"/></svg></div>
      </div>
    </section>
    <section class="panel chart"><p>Seleccione las opciones para mostrar el<br>gráfico</p></section>
  </div>
</main>
</body>
</html>
```
FILE: styles.css
```css
* { box-sizing: border-box; }
body { margin: 0; width: 1914px; height: 959px; overflow: hidden; background: #213b71; font-family: "Open Sans", "Noto Sans", sans-serif; display: flex; flex-direction: column; }
button { border: 0; padding: 0; font-family: inherit; display: flex; align-items: center; justify-content: center; }
.header { height: 67px; flex: none; background: #e8eaeb; border-top: 1px solid #fff; box-shadow: inset 0 1px 0 #c8cdd0; display: flex; align-items: center; padding: 1px 6px 0 10px; }
.logo-unizar { flex: none; margin-top: -1px; }
.title { margin: 0 auto 0 17px; color: #213b71; font-size: 28px; line-height: 38px; font-weight: 700; white-space: nowrap; letter-spacing: -0.3px; }
.title .code { letter-spacing: 0.58px; }
.logo-mcin { flex: none; }
.uz-name { font: 700 19px "Open Sans", sans-serif; fill: #0a5ea8; }
.uz-city { font: 400 15px "Open Sans", sans-serif; fill: #111; }
.uz-year { font: 400 5px "Open Sans", sans-serif; fill: #4a7fc0; }
.mcin text { font: 700 5.600px Lato, sans-serif; fill: #4e4100; }
.aei text { font: 700 4.200px Lato, sans-serif; fill: #222; }

.main { display: flex; gap: 22px; padding: 18px 11px 0 5px; align-items: flex-start; }
.map { position: relative; width: 842px; height: 858px; flex: none; overflow: hidden; }
.map-canvas { display: block; }
.road { fill: none; stroke: #ea8aa2; stroke-width: 1.300; stroke-linejoin: round; }
.road g path { stroke-width: 4.500; }
.road.minor g path { stroke: #f9c3ac; stroke-width: 3.600; }
.border { fill: none; stroke: #a594b8; stroke-linejoin: round; }
.border g > * { stroke-width: 8.500; opacity: .85; }
.border.thin g > * { stroke-width: 5; opacity: .65; }
.border.sea g > * { stroke-width: 6.500; opacity: .9; }
.fires path { fill: #e6261c; fill-opacity: .85; stroke: #575b45; stroke-width: 1.600; stroke-linejoin: round; }
.fire-in path { fill: #c9685c; fill-opacity: .8; }
.dots circle { fill: #fff; stroke: #666; stroke-width: 1.200; }
.capital circle { fill: #ddd; stroke: #444; stroke-width: 1.500; }
.capital-dot circle { fill: #333; }
.lbl text { font-family: "Noto Sans", "DejaVu Sans", sans-serif; font-size: 15px; fill: #3a3a3a; stroke: rgba(255,255,255,.7); stroke-width: 3px; stroke-linejoin: round; paint-order: stroke; }
.lbl.big text { font-size: 18px; }
.lbl.region text { font-style: italic; fill: #8d6598; font-size: 14.500px; }
.lbl.country text { fill: #7d5786; font-size: 18px; }

.layers { position: absolute; left: 770px; top: 16px; width: 57px; height: 57px; padding-right: 2px; background: #213b71; border-radius: 3px; box-shadow: 0 1px 3px rgba(0,0,0,.4); }
.tools { position: absolute; left: 765px; top: 97px; width: 69px; height: 297px; padding: 11px 5px 0 4px; background: rgba(255,255,255,.5); border-radius: 4px; display: flex; flex-direction: column; gap: 12px; }
.tool { width: 60px; height: 60px; background: #4fa0cf; border-radius: 4px; }
.overview { position: absolute; left: 390px; top: 621px; width: 227px; height: 227px; border: 1px solid #666; }
.overview svg { display: block; }
.extent { position: absolute; left: 82px; top: 82px; width: 61px; height: 61px; border: 2px dotted #707070; }
.collapse { position: absolute; left: 1px; top: 191px; width: 33px; height: 33px; background: #fff; border-radius: 3px; font-size: 22px; font-weight: 700; color: #555; padding-top: 2px; }
.credits { position: absolute; left: 19px; top: 819px; width: 370px; height: 27px; border-radius: 4px; background: #213b71; color: #fff; font-size: 16.750px; line-height: 29px; text-align: center; white-space: nowrap; }
.info { position: absolute; left: 795px; top: 812px; width: 33px; height: 33px; border-radius: 3px; background: #213b71; color: #d9dadb; font: 700 24px "Open Sans", sans-serif; box-shadow: 0 0 0 1px rgba(0,0,0,.12); }

.side { flex: 1; display: flex; flex-direction: column; gap: 23px; }
.panel { background: #e8eaeb; }
.filters { height: 254px; padding: 15px 30px 0; overflow: hidden; }
.tabs { display: flex; height: 96px; border-bottom: 1px solid #000; }
.tab { border: 1px solid #dcdad8; border-bottom: 0; border-radius: 7px 7px 0 0; font-size: 22.500px; line-height: 32px; text-align: center; padding-top: 17px; color: #0d0d0d; white-space: nowrap; letter-spacing: 0.2px; }
.tab.active { width: 286px; height: 98px; border-color: #000; color: #29488a; background: #e8eaeb; padding-top: 18px; }
.tab.mid { width: 350px; }
.tab.last { flex: 1; }
.selects { padding: 15px 15px 0; display: flex; flex-direction: column; gap: 9px; }
.select { height: 36px; background: #fff; border: 1px solid #c9cbcd; border-radius: 7px; padding: 1px 7px 0 5px; display: flex; align-items: center; justify-content: space-between; font-size: 19.800px; color: #333; }
.select svg { fill: none; stroke: #333; stroke-width: 2; }
.chart { height: 583px; display: flex; justify-content: center; padding-top: 240px; }
.chart p { margin: 0; text-align: center; font-size: 34px; line-height: 54px; color: #262626; white-space: nowrap; }
```
